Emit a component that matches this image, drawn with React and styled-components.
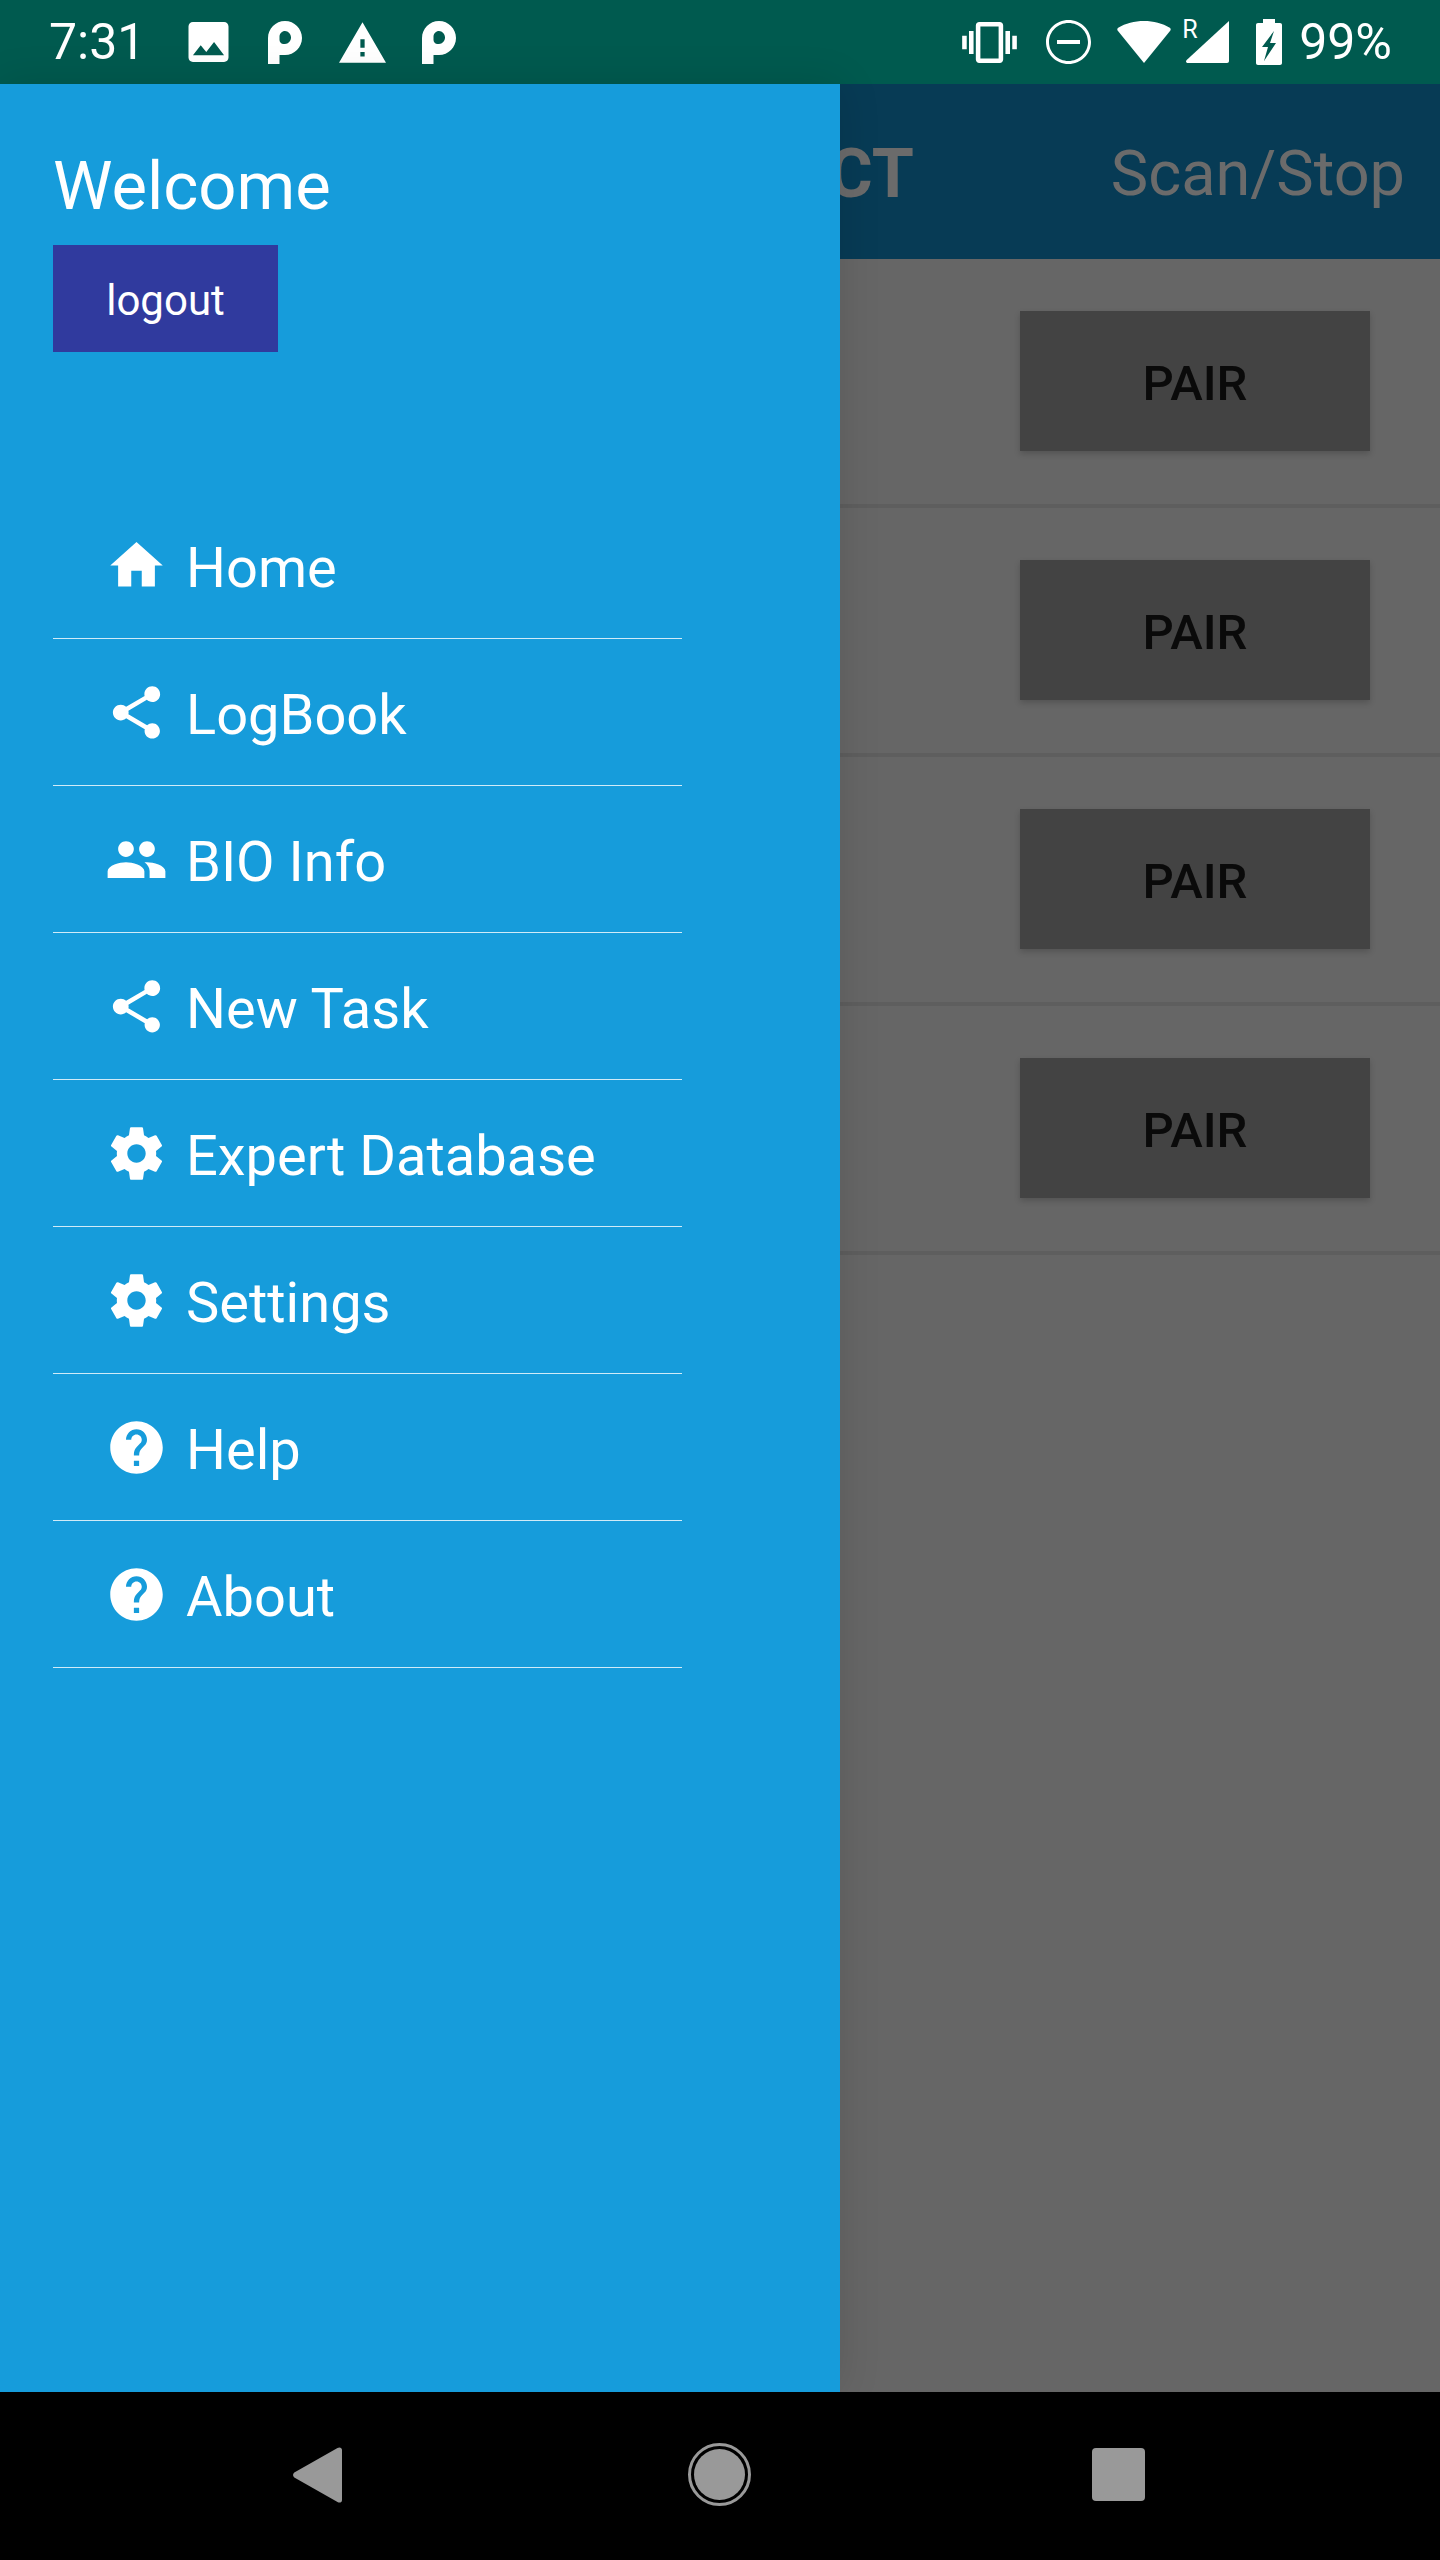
import styled, { createGlobalStyle } from "styled-components";
import { MdGroup, MdHelp, MdHome, MdShare } from "react-icons/md";

const GlobalStyle = createGlobalStyle`
  html, body {
    margin: 0;
    padding: 0;
    background: #000;
  }
  * {
    box-sizing: border-box;
  }
`;

const Screen = styled.div`
  width: 1440px;
  height: 2560px;
  display: flex;
  flex-direction: column;
  font-family: Roboto, "Liberation Sans", sans-serif;
  overflow: hidden;
`;

const StatusBar = styled.header`
  height: 84px;
  flex: none;
  display: flex;
  align-items: center;
  justify-content: space-between;
  padding: 0 48px 0 49px;
  background: #005a4f;
  color: #fff;
`;

const StatusGroup = styled.div`
  display: flex;
  align-items: center;
`;

const StatusText = styled.span`
  font-size: 50px;
  line-height: 56px;
  margin-left: ${(p) => p.$gap || 0}px;
`;

const StatusIcon = styled.svg`
  flex: none;
  display: block;
  fill: #fff;
  margin-left: ${(p) => p.$gap || 0}px;
`;

const SignalSlot = styled.div`
  position: relative;
  margin-left: 15px;
`;

const RoamingMark = styled.span`
  position: absolute;
  left: -4px;
  top: -5px;
  font-size: 25px;
  line-height: 28px;
`;

const Stage = styled.main`
  position: relative;
  flex: 1;
  min-height: 0;
  background: #666;
`;

const AppBar = styled.div`
  height: 175px;
  display: flex;
  align-items: center;
  justify-content: flex-end;
  padding: 5px 35px 0 0;
  background: #073b55;
  color: #6b6b6b;
`;

const AppTitle = styled.h1`
  margin: 0 197px 0 0;
  font-size: 68px;
  font-weight: 700;
  line-height: 80px;
`;

const ScanAction = styled.span`
  font-size: 63px;
  line-height: 80px;
`;

const DeviceRow = styled.div`
  height: 249px;
  display: flex;
  align-items: flex-start;
  justify-content: flex-end;
  padding: 52px 70px 0 0;
  border-bottom: 4px solid #5e5e5e;
`;

const PairButton = styled.button`
  width: 350px;
  height: 140px;
  padding: 5px 0 0;
  border: 0;
  border-radius: 0;
  background: #434343;
  color: #0a0a0a;
  font-family: inherit;
  font-size: 49px;
  font-weight: 500;
  box-shadow: 0 3px 6px rgba(0, 0, 0, 0.18);
`;

const Drawer = styled.aside`
  position: absolute;
  top: 0;
  bottom: 0;
  left: 0;
  width: 840px;
  padding: 62px 0 0 53px;
  background: #169cdb;
  color: #fff;
  box-shadow: 0 0 40px rgba(0, 0, 0, 0.12);
`;

const Welcome = styled.div`
  font-size: 67px;
  line-height: 80px;
`;

const LogoutButton = styled.button`
  display: block;
  width: 225px;
  height: 107px;
  margin-top: 19px;
  padding: 4px 0 0;
  border: 0;
  background: #303a9e;
  color: #fff;
  font-family: inherit;
  font-size: 42px;
`;

const Menu = styled.nav`
  width: 629px;
  margin-top: 140px;
`;

const MenuItem = styled.a`
  height: 147px;
  display: flex;
  align-items: center;
  gap: 18px;
  padding-left: 52px;
  border-bottom: 1.5px solid rgba(255, 255, 255, 0.8);
  font-size: 56px;
`;

const MenuIcon = styled.span`
  width: 63px;
  height: 63px;
  flex: none;
  display: flex;
  font-size: 63px;
`;

const MenuLabel = styled.span`
  padding-top: 6px;
`;

const GearIcon = styled.svg`
  display: block;
  fill: currentColor;
`;

const NavBar = styled.footer`
  height: 168px;
  flex: none;
  display: flex;
  align-items: center;
  justify-content: center;
  padding: 0 2px 3px 0;
  background: #000;
`;

const BackKey = styled.svg`
  display: block;
  fill: #999;
`;

const HomeKey = styled.div`
  width: 63px;
  height: 63px;
  margin: 0 341px 0 346px;
  border: 3px solid #999;
  border-radius: 50%;
  padding: 3px;

  &::after {
    content: "";
    display: block;
    width: 100%;
    height: 100%;
    border-radius: 50%;
    background: #999;
  }
`;

const RecentKey = styled.div`
  width: 53px;
  height: 53px;
  border-radius: 4px;
  background: #999;
`;

const P_PATH =
  "M0 43V17C0 7.600 7.600 0 17 0s17 7.600 17 17-7.600 17-17 17h-5.500v9zM17 10c-3 0-5.500 2.500-5.500 5.500v3.500c0 2.200 1.800 4 4 4h1.500c3.300 0 6-3 6-6.500S20.300 10 17 10z";

function SettingsIcon() {
  return (
    <GearIcon width="63" height="63" viewBox="0 0 24 24">
      <path d="M19.430 12.980c.04-.32.07-.64.07-.98s-.03-.66-.07-.98l2.110-1.650c.19-.15.24-.42.12-.64l-2-3.460c-.12-.22-.39-.3-.61-.22l-2.490 1c-.52-.4-1.080-.73-1.690-.98l-.38-2.650C14.460 2.180 14.250 2 14 2h-4c-.25 0-.46.18-.49.42l-.38 2.650c-.61.25-1.170.59-1.690.98l-2.490-1c-.23-.09-.49 0-.61.22l-2 3.460c-.13.22-.07.49.12.64l2.110 1.650c-.04.32-.07.65-.07.98s.03.66.07.98l-2.110 1.650c-.19.15-.24.42-.12.64l2 3.460c.12.22.39.3.61.22l2.490-1c.52.4 1.080.73 1.690.98l.38 2.650c.03.24.24.42.49.42h4c.25 0 .46-.18.49-.42l.38-2.650c.61-.25 1.170-.59 1.690-.98l2.490 1c.23.09.49 0 .61-.22l2-3.460c.12-.22.07-.49-.12-.64l-2.110-1.650zM12 15.500c-1.930 0-3.500-1.570-3.500-3.500s1.570-3.500 3.500-3.500 3.500 1.570 3.500 3.500-1.570 3.500-3.500 3.500z" />
    </GearIcon>
  );
}

const menuItems = [
  { label: "Home", Icon: MdHome },
  { label: "LogBook", Icon: MdShare },
  { label: "BIO Info", Icon: MdGroup },
  { label: "New Task", Icon: MdShare },
  { label: "Expert Database", Icon: SettingsIcon },
  { label: "Settings", Icon: SettingsIcon },
  { label: "Help", Icon: MdHelp },
  { label: "About", Icon: MdHelp },
];

function ParkingIcon({ gap }) {
  return (
    <StatusIcon $gap={gap} width="34" height="43" viewBox="0 0 34 43">
      <path fillRule="evenodd" d={P_PATH} />
    </StatusIcon>
  );
}

function App() {
  return (
    <Screen>
      <GlobalStyle />
      <StatusBar>
        <StatusGroup>
          <StatusText>7:31</StatusText>
          <StatusIcon $gap={43} width="41" height="40" viewBox="3 3 18 18">
            <path d="M21 19V5c0-1.100-.9-2-2-2H5c-1.100 0-2 .9-2 2v14c0 1.100.9 2 2 2h14c1.100 0 2-.9 2-2zM8.500 13.500l2.500 3.010L14.500 12l4.500 6H5l3.500-4.500z" />
          </StatusIcon>
          <ParkingIcon gap={39} />
          <StatusIcon $gap={37} width="47" height="41" viewBox="1 2 22 19">
            <path d="M1 21h22L12 2 1 21zm12-3h-2v-2h2v2zm0-4h-2v-4h2v4z" />
          </StatusIcon>
          <ParkingIcon gap={36} />
        </StatusGroup>
        <StatusGroup>
          <StatusIcon width="57" height="41" viewBox="0 3 24 18">
            <path d="M0 15h2V9H0v6zm3 2h2V7H3v10zm19-8v6h2V9h-2zm-3 8h2V7h-2v10zM16.500 3h-9C6.670 3 6 3.670 6 4.500v15c0 .83.67 1.500 1.500 1.500h9c.83 0 1.500-.67 1.500-1.500v-15c0-.83-.67-1.500-1.500-1.500zM16 19H8V5h8v14z" />
          </StatusIcon>
          <StatusIcon $gap={28} width="45" height="44" viewBox="0 0 45 44">
            <path
              fillRule="evenodd"
              d="M22.500 0C34.900 0 45 9.800 45 22s-10.100 22-22.500 22S0 34.200 0 22 10.100 0 22.500 0zm0 3C12 3 3 11.500 3 22s9 19 19.500 19S42 32.500 42 22 33 3 22.500 3zM11 20h23v4H11z"
            />
          </StatusIcon>
          <StatusIcon $gap={26} width="54" height="42" viewBox="0 0 54 42">
            <path d="M27 42 1 10C0 8.800 0 7.500 1.200 6.700 8.500 2.300 17.500 0 27 0s18.500 2.300 25.800 6.700C54 7.500 54 8.800 53 10L27 42z" />
          </StatusIcon>
          <SignalSlot>
            <RoamingMark>R</RoamingMark>
            <StatusIcon width="43" height="42" viewBox="0 0 43 42">
              <path d="M43 0v40c0 1.200-.8 2-2 2H2c-2 0-2.600-1.600-1.300-3L43 0z" />
            </StatusIcon>
          </SignalSlot>
          <StatusIcon $gap={27} width="26" height="46" viewBox="0 0 26 46">
            <path
              fillRule="evenodd"
              d="M7 0h12v4h5c1.200 0 2 .8 2 2v38c0 1.200-.8 2-2 2H2c-1.200 0-2-.8-2-2V6c0-1.200.8-2 2-2h5V0zm11 12L6 28h6l-4 14 12-18h-6l4-12z"
            />
          </StatusIcon>
          <StatusText $gap={17}>99%</StatusText>
        </StatusGroup>
      </StatusBar>

      <Stage>
        <AppBar>
          <AppTitle>CONNECT</AppTitle>
          <ScanAction>Scan/Stop</ScanAction>
        </AppBar>
        {[0, 1, 2, 3].map((row) => (
          <DeviceRow key={row}>
            <PairButton>PAIR</PairButton>
          </DeviceRow>
        ))}

        <Drawer>
          <Welcome>Welcome</Welcome>
          <LogoutButton>logout</LogoutButton>
          <Menu>
            {menuItems.map(({ label, Icon }) => (
              <MenuItem key={label}>
                <MenuIcon>
                  <Icon />
                </MenuIcon>
                <MenuLabel>{label}</MenuLabel>
              </MenuItem>
            ))}
          </Menu>
        </Drawer>
      </Stage>

      <NavBar>
        <BackKey width="49" height="56" viewBox="0 0 49 56">
          <path d="M1.300 30.500C-.4 29-.4 27 1.300 25.500L44.500 1C46.500-.3 49 .5 49 3v50c0 2.500-2.500 3.300-4.500 2L1.300 30.500z" />
        </BackKey>
        <HomeKey />
        <RecentKey />
      </NavBar>
    </Screen>
  );
}

export default App;
